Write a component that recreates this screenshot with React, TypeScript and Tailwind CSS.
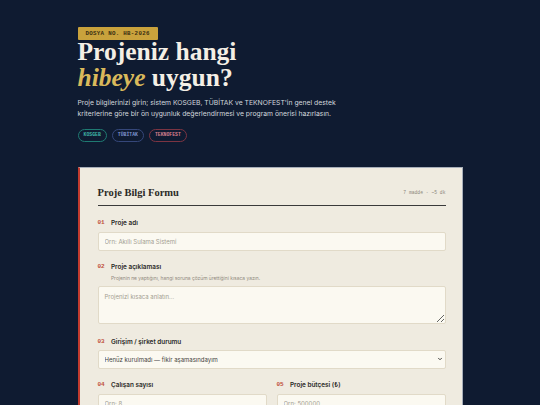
import { ChevronDown } from 'lucide-react';

const serif = { fontFamily: '"Liberation Serif", "DejaVu Serif", serif' };

const TAGS = [
  { name: 'KOSGEB', cls: 'border-[#1f7a72] text-[#3fb3a6]' },
  { name: 'TÜBİTAK', cls: 'border-[#35477a] text-[#7f95d0]' },
  { name: 'TEKNOFEST', cls: 'border-[#7c3442] text-[#d57f8d]' },
];

function Label({ no, text }: { no: string; text: string }) {
  return (
    <div className="flex h-[10px] items-center leading-[10px]">
      <span className="w-[13.5px] font-['Liberation_Mono',monospace] text-[6px] font-bold text-[#c0503a]">{no}</span>
      <span className="text-[6.4px] font-semibold text-[#2b2a27]">{text}</span>
    </div>
  );
}

const inputCls =
  'block w-full rounded-[2px] border border-[#e1dac8] bg-[#fbf9f1] px-[6px] text-[6px] text-[#3b3a36] placeholder:text-[#a39e92] outline-none';

export default function App() {
  return (
    <div className="min-h-screen bg-[#0f1b31] font-['Inter',sans-serif]">
      <div className="mx-auto w-[385px] pt-[27px]">
        {/* Badge */}
        <div className="flex h-[13px] w-fit items-center rounded-[1px] bg-[#c9a23c] px-[8px] font-['Liberation_Mono',monospace] text-[5.8px] font-bold leading-none tracking-[0.3px] text-[#3a2e12]">
          DOSYA NO. HB-2026
        </div>

        {/* Title */}
        <h1 className="mt-[-1px] text-[25.5px] font-bold leading-[26px] text-[#f4efe5]" style={serif}>
          Projeniz hangi
          <br />
          <em className="text-[#d9b95b]">hibeye</em> uygun?
        </h1>

        <p className="mt-[6px] text-[6.8px] leading-[11px] text-[#d3d7dd]">
          Proje bilgilerinizi girin; sistem KOSGEB, TÜBİTAK ve TEKNOFEST'in genel destek
          <br />
          kriterlerine göre bir ön uygunluk değerlendirmesi ve program önerisi hazırlasın.
        </p>

        {/* Tags */}
        <div className="mt-[10px] flex gap-[5px]">
          {TAGS.map(t => (
            <span
              key={t.name}
              className={`flex h-[13px] items-center rounded-full border px-[5px] font-['Liberation_Mono',monospace] text-[4.8px] font-bold leading-none ${t.cls}`}
            >
              {t.name}
            </span>
          ))}
        </div>

        {/* Form card */}
        <div className="mt-[25px] border border-l-2 border-[#a7aeb9] border-l-[#c23b2e] bg-[#efebe0] pl-[18px] pr-[16px] pt-[18px] pb-[20px]">
          <div className="flex items-center justify-between border-b border-[#3a3a3a] pb-[5px]">
            <h2 className="text-[10.5px] font-bold leading-[14px] text-[#2b2a27]" style={serif}>
              Proje Bilgi Formu
            </h2>
            <span className="font-['Liberation_Mono',monospace] text-[4.7px] text-[#8d887c]">7 madde · ~5 dk</span>
          </div>

          {/* 01 */}
          <div className="mt-[12px]">
            <Label no="01" text="Proje adı" />
            <input className={`${inputCls} mt-[3.5px] h-[19px]`} placeholder="Örn: Akıllı Sulama Sistemi" />
          </div>

          {/* 02 */}
          <div className="mt-[11px]">
            <Label no="02" text="Proje açıklaması" />
            <p className="mt-[3.5px] pl-[13.5px] text-[4.9px] leading-[7px] text-[#8f8a7e]">
              Projenin ne yaptığını, hangi soruna çözüm ürettiğini kısaca yazın.
            </p>
            <textarea
              className={`${inputCls} mt-[4px] h-[38px] resize-y pt-[5px]`}
              placeholder="Projenizi kısaca anlatın..."
            />
          </div>

          {/* 03 */}
          <div className="mt-[13px]">
            <Label no="03" text="Girişim / şirket durumu" />
            <div className="relative mt-[2.5px]">
              <select className={`${inputCls} h-[19.5px] appearance-none pl-[6px] text-[#45433d]`} defaultValue="a">
                <option value="a">Henüz kurulmadı — fikir aşamasındayım</option>
                <option value="b">Şahıs şirketi</option>
                <option value="c">Limited / Anonim şirket</option>
              </select>
              <ChevronDown
                size={6}
                strokeWidth={3.5}
                className="pointer-events-none absolute right-[3px] top-1/2 -translate-y-1/2 text-[#2b2a27]"
              />
            </div>
          </div>

          {/* 04 / 05 */}
          <div className="mt-[11px] grid grid-cols-2 gap-[10px]">
            <div>
              <Label no="04" text="Çalışan sayısı" />
              <input className={`${inputCls} mt-[3.5px] h-[19px]`} placeholder="Örn: 8" />
            </div>
            <div>
              <Label no="05" text="Proje bütçesi (₺)" />
              <input className={`${inputCls} mt-[3.5px] h-[19px]`} placeholder="Örn: 500000" />
            </div>
          </div>
        </div>
      </div>
    </div>
  );
}
